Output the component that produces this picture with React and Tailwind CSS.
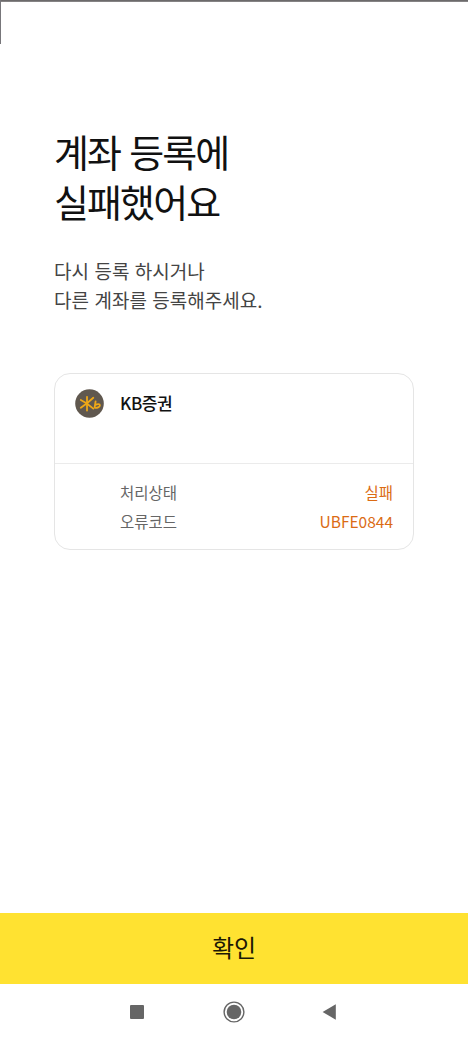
import React from 'react';

const details = [
  { label: '처리상태', value: '실패' },
  { label: '오류코드', value: 'UBFE0844' },
];

function BankLogo() {
  return (
    <svg className="w-[29px] h-[29px] shrink-0" viewBox="0 0 29 29" fill="none">
      <circle cx="14.5" cy="14.5" r="14.3" fill="#60584f" />
      <g stroke="#efa817" strokeWidth="1.8" strokeLinecap="round" strokeLinejoin="round">
        <path d="M12 7.8V21.6" />
        <path d="M5.8 11L11.5 14.2L18.3 19.6" />
        <path d="M5.8 18.8L12 14.2L18.3 8.8" />
        <path d="M20.6 12.4L19.6 18.6C22 19.4 24.9 18 24.9 16.3C24.9 14.8 22.4 14.8 20.3 16" />
      </g>
    </svg>
  );
}

function NavBar() {
  return (
    <div className="h-14 flex items-center bg-white text-[#666666]">
      <div className="w-[14px] h-[14px] ml-[130px] rounded-[1px] bg-[#666666]" />
      <svg className="w-[22px] h-[22px] ml-[79px]" viewBox="0 0 22 22" fill="none">
        <circle cx="11" cy="11" r="9.9" stroke="currentColor" strokeWidth="1.4" />
        <circle cx="11" cy="11" r="7.3" fill="currentColor" />
      </svg>
      <svg className="w-[14px] h-4 ml-[77px]" viewBox="0 0 14 16" fill="currentColor">
        <path d="M13.8 0.3V15.7L0.6 8Z" />
      </svg>
    </div>
  );
}

export default function App() {
  return (
    <div className="relative h-[1040px] w-[468px] flex flex-col bg-white overflow-hidden font-['Noto_Sans_CJK_KR',sans-serif]">
      <div className="absolute top-0 left-0 w-full h-0.5 bg-[#858384] border-t border-[#6c6a6b]" />
      <div className="absolute top-0 left-0 w-px h-11 bg-[#77767a]" />

      <main className="flex-1 px-[54px] pt-[126px]">
        <h1 className="text-[38px] leading-[50px] tracking-[-1.9px] [word-spacing:2.5px] text-[#111111]">
          계좌 등록에<br />실패했어요
        </h1>
        <p className="mt-[31px] text-[19px] leading-[28.5px] [word-spacing:1.2px] text-[#444444]">
          다시 등록 하시거나<br />다른 계좌를 등록해주세요.
        </p>

        <section className="mt-[59px] h-[177px] border-[1.5px] border-[#e5e5e5] rounded-2xl">
          <div className="h-[89px] pt-[15px] pl-5 flex items-start gap-[17px]">
            <BankLogo />
            <div className="-mt-px -ml-px text-[17px] leading-[29px] font-medium tracking-[-0.4px] text-[#111111]">KB증권</div>
          </div>
          <div className="border-t border-[#ebebeb] pt-[14px] pl-[65px] pr-5">
            {details.map((d) => (
              <div key={d.label} className="flex justify-between text-[15.5px] leading-[29px]">
                <span className="text-[#666666]">{d.label}</span>
                <span className="text-[#db6b14]">{d.value}</span>
              </div>
            ))}
          </div>
        </section>
      </main>

      <button className="h-[71px] pb-[3px] bg-[#ffe231] text-[24px] leading-none text-[#1c1805]">확인</button>
      <NavBar />
    </div>
  );
}
